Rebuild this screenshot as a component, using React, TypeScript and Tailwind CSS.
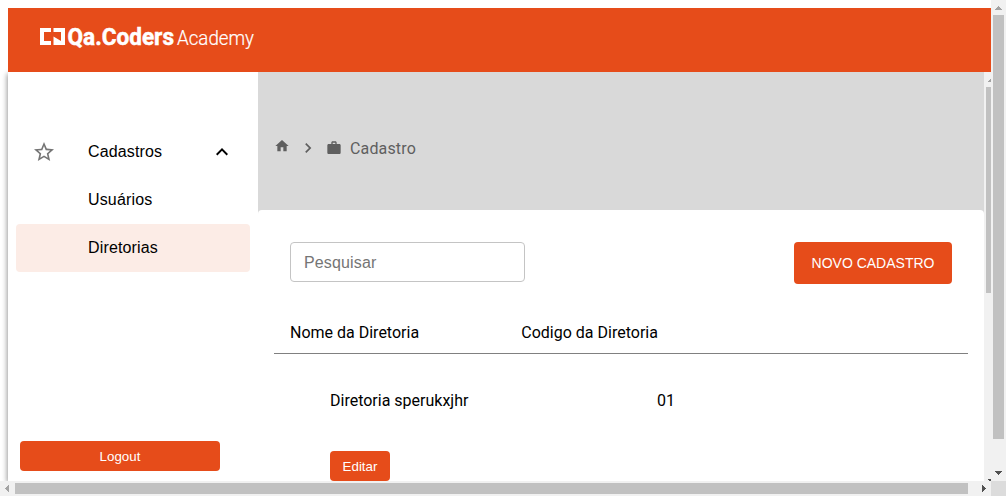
import React from "react";

function Arrow({ d, fill }: { d: string; fill: string }) {
  return (
    <svg width="15" height="15" viewBox="0 0 15 15" className="block shrink-0" shapeRendering="crispEdges">
      <path d={d} fill={fill} />
    </svg>
  );
}

const UP = "M7 6h1v1h1v1h1v1h1v1H4V9h1V8h1V7h1z";
const DOWN = "M4 5h7v1h-1v1H9v1H8v1H7V8H6V7H5V6H4z";
const LEFT = "M9 4v7H8v-1H7V9H6V8H5V7h1V6h1V5h1V4z";
const RIGHT = "M6 4h1v1h1v1h1v1h1v1H9v1H8v1H7v1H6z";

function Icon({ d, className }: { d: string; className: string }) {
  return (
    <svg viewBox="0 0 24 24" fill="currentColor" className={className}>
      <path d={d} />
    </svg>
  );
}

function Logo() {
  return (
    <svg width="218" height="32" viewBox="0 0 218 32" fill="#fff" className="block">
      <path d="M0 8h11v4H4v9h7v4H0zM13.500 8H25v17H13.500v-8.500l7.500 4.500v-9h-7.500z" />
      <text x="27.500" y="25" fontSize="23" fontWeight="700" stroke="#fff" strokeWidth="0.500" textLength="106.500" lengthAdjust="spacingAndGlyphs" className="font-['Roboto',sans-serif]">Qa.Coders</text>
      <text x="137" y="24.500" fontSize="20" fontWeight="300" stroke="#fff" strokeWidth="0.200" textLength="77" lengthAdjust="spacingAndGlyphs" className="font-['Roboto',sans-serif]">Academy</text>
    </svg>
  );
}

function Sidebar() {
  return (
    <aside className="flex w-[250px] shrink-0 flex-col bg-white px-2 pt-14 pb-[10px] shadow-[-1px_2px_5px_rgba(0,0,0,0.4)]">
      <nav className="text-base tracking-[0.15px] text-black">
        <div className="flex h-12 items-center pr-4 pl-4">
          <Icon className="mr-8 size-6 text-[#757575]" d="m22 9.24-7.19-.62L12 2 9.19 8.63 2 9.24l5.46 4.73L5.82 21 12 17.27 18.18 21l-1.63-7.03L22 9.24zM12 15.4l-3.76 2.27 1-4.28-3.32-2.88 4.38-.38L12 6.1l1.71 4.04 4.38.38-3.32 2.88 1 4.28L12 15.4z" />
          <span className="flex-1">Cadastros</span>
          <Icon className="size-6 text-black" d="m12 8-6 6 1.41 1.41L12 10.83l4.59 4.58L18 14z" />
        </div>
        <div className="flex h-12 items-center pl-[72px]">Usuários</div>
        <div className="flex h-12 items-center rounded bg-[#fcece6] pl-[72px]">Diretorias</div>
      </nav>
      <button className="mt-auto ml-1 h-[30px] w-[200px] rounded bg-[#e64c1a] pt-[2px] text-[13.333px] text-white">Logout</button>
    </aside>
  );
}

function Content() {
  return (
    <main className="z-10 flex min-w-0 flex-1 flex-col bg-[#d9d9d9] font-['Roboto',sans-serif]">
      <div className="flex h-[138px] shrink-0 items-center pt-[14px] pl-4 text-[#5f5f5f]">
        <Icon className="mb-[5px] size-4" d="M10 20v-6h4v6h5v-8h3L12 3 2 12h3v8z" />
        <Icon className="mr-2 ml-2 size-5" d="M10 6 8.59 7.41 13.17 12l-4.58 4.59L10 18l6-6z" />
        <Icon className="size-4" d="M20 6h-4V4c0-1.11-.89-2-2-2h-4c-1.11 0-2 .89-2 2v2H4c-1.11 0-2 .89-2 2v11c0 1.11.89 2 2 2h16c1.11 0 2-.89 2-2V8c0-1.11-.89-2-2-2m-6 0h-4V4h4z" />
        <span className="ml-2 pt-[2px] text-base tracking-[0.15px]">Cadastro</span>
      </div>
      <section className="min-h-0 flex-1 overflow-hidden rounded-t bg-white px-4 pt-8 text-base text-black">
        <div className="flex justify-between px-4">
          <input placeholder="Pesquisar" className="h-10 w-[235px] rounded border border-[#c4c4c4] bg-white px-[13px] pt-[2px] font-['Liberation_Sans',sans-serif] tracking-[0.15px] placeholder:text-[#757575]" />
          <button className="h-[42px] w-[158px] rounded bg-[#e64c1a] font-['Liberation_Sans',sans-serif] text-sm text-white">NOVO CADASTRO</button>
        </div>
        <div className="mt-7 flex h-[42px] items-center border-b border-[#808080] pl-4">
          <span className="w-[231px]">Nome da Diretoria</span>
          <span className="pl-[0.3px]">Codigo da Diretoria</span>
        </div>
        <div className="flex pt-[35px] pl-14 leading-6">
          <span className="w-[327px]">Diretoria sperukxjhr</span>
          <span>01</span>
        </div>
        <button className="mt-[38px] ml-14 block h-[30px] w-[60px] rounded bg-[#e64c1a] pt-[2px] font-['Liberation_Sans',sans-serif] text-[13.333px] text-white">Editar</button>
      </section>
    </main>
  );
}

export default function App() {
  return (
    <div className="flex h-[496px] w-[1006px] flex-col overflow-hidden bg-white font-['Liberation_Sans',Arial,sans-serif]">
      <div className="flex h-[481px]">
        <div className="flex w-[991px] flex-col overflow-hidden pt-2 pl-2">
          <header className="z-20 h-16 shrink-0 bg-[#e64c1a] pt-3 pl-8">
            <Logo />
          </header>
          <div className="flex min-h-0 flex-1">
            <Sidebar />
            <Content />
            <div className="flex w-[7px] shrink-0 flex-col overflow-hidden bg-[#f1f1f1]">
              <Arrow d={UP} fill="#a3a3a3" />
              <div className="ml-[2px] h-[206px] w-[5px] bg-[#c1c1c1]" />
              <div className="mt-auto -mb-2">
                <Arrow d={DOWN} fill="#505050" />
              </div>
            </div>
          </div>
        </div>
        <div className="flex w-[15px] flex-col items-center bg-[#f1f1f1]">
          <Arrow d={UP} fill="#a3a3a3" />
          <div className="h-[424px] w-[11px] bg-[#c1c1c1]" />
          <div className="mt-auto">
            <Arrow d={DOWN} fill="#505050" />
          </div>
        </div>
      </div>
      <div className="flex h-[15px] items-center bg-[#f1f1f1]">
        <Arrow d={LEFT} fill="#a3a3a3" />
        <div className="h-[11px] w-[953px] bg-[#c1c1c1]" />
        <div className="ml-auto">
          <Arrow d={RIGHT} fill="#505050" />
        </div>
        <div className="size-[15px] bg-[#dcdcdc]" />
      </div>
    </div>
  );
}
